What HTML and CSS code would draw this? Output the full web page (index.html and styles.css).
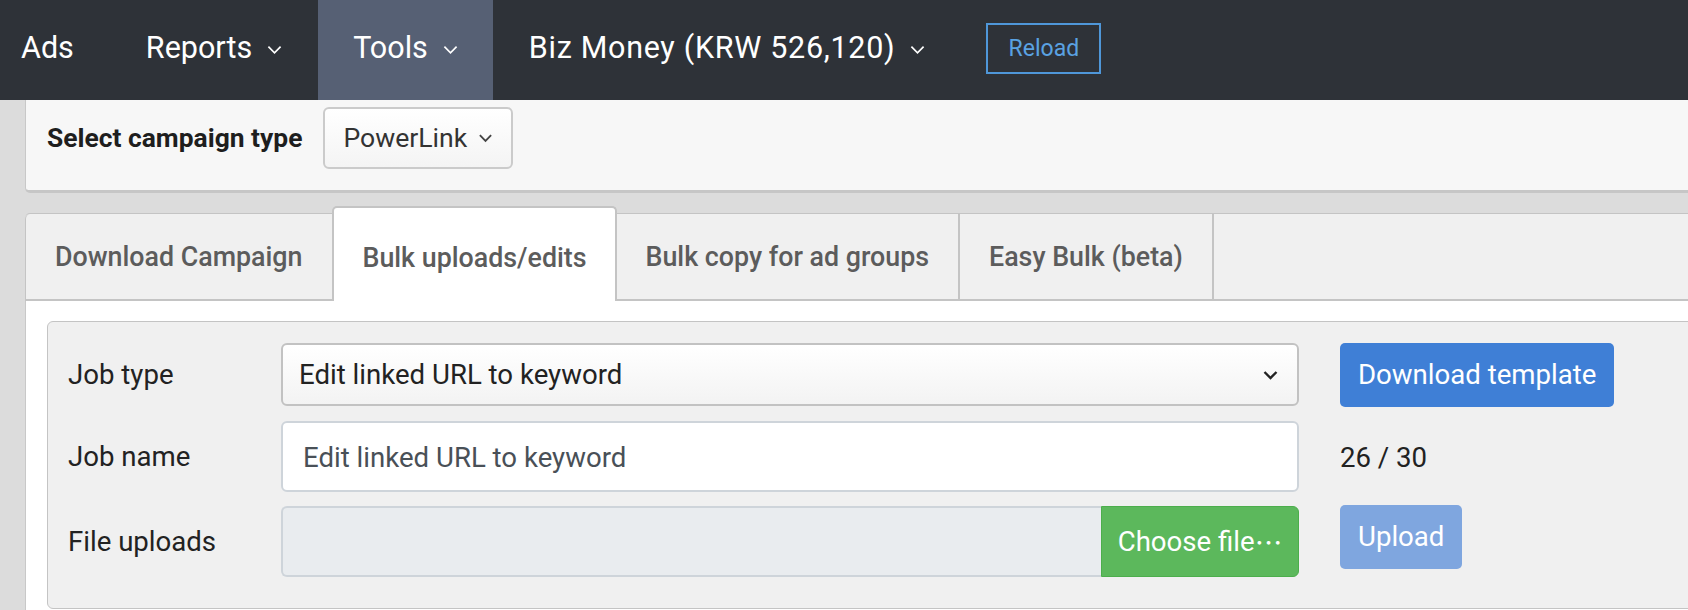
FILE: index.html
```html
<!DOCTYPE html>
<html lang="ko">
<head>
    <meta charset="UTF-8">
    <meta name="viewport" content="width=device-width, initial-scale=1.0">
    <title>Tools - Bulk uploads/edits</title>
    <link rel="stylesheet" href="styles.css">
</head>
<body>
    <nav class="topbar">
        <a class="nav-item nav-first">Ads</a>
        <a class="nav-item">Reports
            <svg class="nav-caret" viewBox="0 0 16 10"><polyline points="1.5,1.5 8,8 14.5,1.5"/></svg>
        </a>
        <a class="nav-item active">Tools
            <svg class="nav-caret" viewBox="0 0 16 10"><polyline points="1.5,1.5 8,8 14.5,1.5"/></svg>
        </a>
        <a class="nav-item nav-money">Biz Money (KRW 526,120)
            <svg class="nav-caret" viewBox="0 0 16 10"><polyline points="1.5,1.5 8,8 14.5,1.5"/></svg>
        </a>
        <button class="reload-btn">Reload</button>
    </nav>

    <div class="page">
        <div class="campaign-bar">
            <span class="campaign-label">Select campaign type</span>
            <div class="campaign-select">PowerLink
                <svg class="select-caret" viewBox="0 0 16 10"><polyline points="2,2 8,8 14,2"/></svg>
            </div>
        </div>

        <div class="tabs">
            <div class="tab tab-first">Download Campaign</div>
            <div class="tab active">Bulk uploads/edits</div>
            <div class="tab">Bulk copy for ad groups</div>
            <div class="tab">Easy Bulk (beta)</div>
        </div>

        <div class="tab-content">
            <div class="form-box">
                <label class="form-label">Job type</label>
                <div class="form-select">Edit linked URL to keyword
                    <svg class="select-caret dark" viewBox="0 0 16 10"><polyline points="2,2 8,8 14,2"/></svg>
                </div>
                <button class="btn btn-primary">Download template</button>

                <label class="form-label">Job name</label>
                <div class="form-input">Edit linked URL to keyword</div>
                <span class="char-count">26 / 30</span>

                <label class="form-label">File uploads</label>
                <div class="file-input">
                    <div class="file-name"></div>
                    <div class="file-btn">Choose file<span class="ellipsis">…</span></div>
                </div>
                <button class="btn btn-primary disabled">Upload</button>
            </div>
        </div>
    </div>
</body>
</html>
```

FILE: styles.css
```css
body {
    margin: 0;
    background-color: #dcdcdc;
    font-family: Roboto, "Noto Sans CJK KR", sans-serif;
    color: #212529;
    overflow: hidden;
}

/* top navigation */
.topbar {
    display: flex;
    align-items: center;
    height: 100px;
    background-color: #2e3238;
    color: #fff;
}

.nav-item {
    display: flex;
    align-items: center;
    gap: 15px;
    height: 100%;
    padding: 0 36px 4px;
    font-size: 30.5px;
    line-height: 1;
    box-sizing: border-box;
}

.nav-first {
    padding-left: 21px;
}

.nav-item.active {
    background-color: #566074;
    padding: 0 35px 4px;
}

.nav-money {
    letter-spacing: 0.7px;
}

.nav-caret {
    width: 15px;
    height: 10px;
    fill: none;
    stroke: #fff;
    stroke-width: 1.8;
    margin-top: 4px;
}

.reload-btn {
    margin-left: 25px;
    width: 115px;
    height: 51px;
    margin-bottom: 4px;
    background: transparent;
    border: 2px solid #4f97d9;
    color: #5aa2e2;
    font-family: inherit;
    font-size: 23px;
    line-height: 1;
    padding: 0;
}

/* page body */
.page {
    margin-left: 25px;
    width: 1700px;
}

.campaign-bar {
    display: flex;
    align-items: center;
    gap: 21px;
    padding: 7px 21px 21px;
    background-color: #f7f7f7;
    border-left: 1px solid #c8c8c8;
    border-bottom: 3px solid #c6c6c6;
    border-bottom-left-radius: 5px;
}

.campaign-label {
    font-size: 26.4px;
    font-weight: 700;
    color: #1e1e1e;
    line-height: 1;
}

.campaign-select {
    display: flex;
    align-items: center;
    gap: 11px;
    height: 62px;
    padding: 0 18px;
    box-sizing: border-box;
    border: 2px solid #cbcbcb;
    border-radius: 6px;
    background: linear-gradient(#fff, #f4f4f4);
    font-size: 26.6px;
    color: #333;
    line-height: 1;
}

.select-caret {
    width: 15px;
    height: 10px;
    fill: none;
    stroke: #444;
    stroke-width: 2;
}

.select-caret.dark {
    width: 17px;
    stroke: #222;
    stroke-width: 2.4;
    margin-left: auto;
}

/* tabs */
.tabs {
    display: flex;
    height: 85px;
    margin-top: 20px;
    background-color: #f0f0f0;
    border-top: 1px solid #c4c4c4;
    border-bottom: 2px solid #c4c4c4;
    border-top-left-radius: 5px;
}

.tab {
    display: flex;
    align-items: center;
    padding: 2px 29px 0;
    border-right: 2px solid #c4c4c4;
    font-size: 26.8px;
    font-weight: 500;
    color: #5c5c5c;
    line-height: 1;
}

.tab-first {
    border-left: 1px solid #c4c4c4;
    border-right: none;
    border-top-left-radius: 5px;
    padding-right: 30px;
}

.tab.active {
    margin-top: -8px;
    margin-bottom: -2px;
    background-color: #fff;
    border: 2px solid #c4c4c4;
    border-bottom: none;
    border-radius: 5px 5px 0 0;
    padding: 7px 28px 0;
}

.tab-content {
    background-color: #fff;
    border-left: 1px solid #c8c8c8;
    padding: 20px 21px;
}

/* form */
.form-box {
    display: grid;
    grid-template-columns: 172px 1018px auto;
    column-gap: 41px;
    row-gap: 14px;
    padding: 21px 20px 31px;
    background-color: #f0f0f0;
    border: 1px solid #c4c4c4;
    border-radius: 6px;
    font-size: 27.6px;
    line-height: 1;
}

.form-label {
    align-self: center;
    color: #222;
}

.form-select {
    display: flex;
    align-items: center;
    height: 63px;
    padding: 0 18px 0 16px;
    box-sizing: border-box;
    border: 2px solid #c2c2c2;
    border-radius: 6px;
    background: linear-gradient(#fff, #f3f3f3);
    color: #222;
}

.form-input {
    display: flex;
    align-items: center;
    height: 71px;
    padding: 2px 20px 0;
    box-sizing: border-box;
    border: 2px solid #ced4da;
    border-radius: 6px;
    background-color: #fff;
    color: #495057;
}

.file-input {
    display: flex;
    height: 71px;
}

.file-name {
    flex: 1;
    background-color: #e9ecef;
    border: 2px solid #ced4da;
    border-right: none;
    border-radius: 6px 0 0 6px;
}

.file-btn {
    display: flex;
    align-items: center;
    justify-content: center;
    width: 198px;
    background-color: #5cb85c;
    border: 1px solid #4cae4c;
    border-radius: 0 6px 6px 0;
    color: #fff;
    box-sizing: border-box;
}

.ellipsis {
    font-family: "Noto Sans CJK KR", sans-serif;
}

.btn {
    justify-self: start;
    align-self: start;
    height: 64px;
    padding: 0 18px;
    border: none;
    border-radius: 5px;
    background-color: #3f7fd6;
    color: #fff;
    font-family: inherit;
    font-size: 27.6px;
    line-height: 1;
    white-space: nowrap;
}

.btn.disabled {
    background-color: #7fa6df;
    margin-top: -1px;
}

.char-count {
    align-self: center;
    color: #222;
    padding-top: 2px;
}
```
